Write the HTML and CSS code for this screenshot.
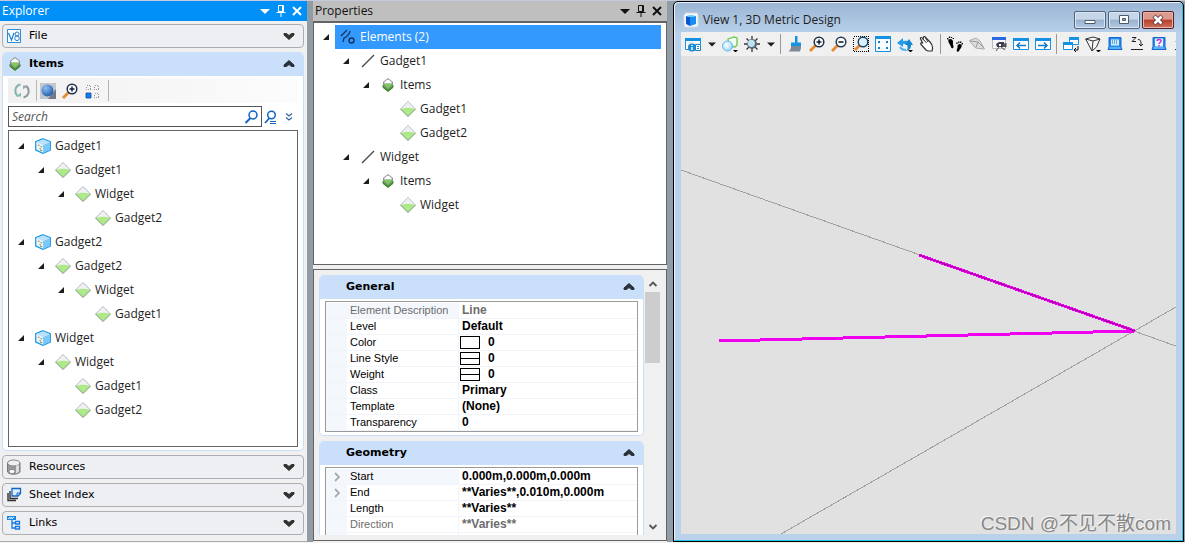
FILE: index.html
```
<!DOCTYPE html>
<html lang="en">
<head>
<meta charset="utf-8">
<title>View 1, 3D Metric Design</title>
<link rel="stylesheet" href="styles.css">
</head>
<body>
<svg class="defs" aria-hidden="true">
  <defs>
    <radialGradient id="g-ball" cx=".35" cy=".3" r=".8"><stop offset="0" stop-color="#8cc0f4"/><stop offset="1" stop-color="#1b55a0"/></radialGradient>
    <radialGradient id="g-bubble" cx=".4" cy=".4" r=".7"><stop offset="0" stop-color="#ffffff"/><stop offset="1" stop-color="#8fd0fa"/></radialGradient>
    <symbol id="expander" viewBox="0 0 8 8"><path d="M7 1v6H1z" fill="#1e1e1e"/></symbol>
    <symbol id="caret" viewBox="0 0 10 10"><path d="M0 3h10L5 8z" fill="currentColor"/></symbol>
    <symbol id="pin" viewBox="0 0 10 12"><path d="M2.500 .5h5v6h-5zM6.500 .5v6M.5 7.500h9M5 7v5" fill="none" stroke="currentColor"/></symbol>
    <symbol id="close" viewBox="0 0 10 10"><path d="M1 1l8 8M9 1L1 9" fill="none" stroke="currentColor" stroke-width="2"/></symbol>
    <symbol id="chev-down" viewBox="0 0 12 8"><path d="M1 1.500h2.500L6 3.500l2.500-2H11v1.500L6 7.500 1 3z" fill="#333" stroke="#333" stroke-linejoin="round"/></symbol>
    <symbol id="chev-up" viewBox="0 0 12 8"><path d="M1 6.500h2.500L6 4.500l2.500 2H11V5L6 .5 1 5z" fill="#2b323a" stroke="#2b323a" stroke-linejoin="round"/></symbol>
    <symbol id="cube" viewBox="0 0 16 16"><path d="M8 .7l7.300 3v8.300L8 15.300.7 12V3.700z" fill="#e2f4ff" stroke="#1a93e0" stroke-width="1.200"/><path d="M8 7l7-3v8l-7 3z" fill="#79c8f8"/><path d="M8 1.500l6.500 2.500L8 7 1.500 4z" fill="#b7e1fc"/><path d="M3 7l1.500.5M4.500 10.500l1.500.5" stroke="#e8733a" stroke-width="1.300"/><path d="M5.500 8.500l1.500.5M5 12l2 .8" stroke="#66b050" stroke-width="1.200"/></symbol>
    <symbol id="diamond" viewBox="0 0 16 16"><path d="M8 .5L15.500 8 8 15.500.5 8z" fill="#eef0f3"/><path d="M2 7.500Q8 6 14 7.500L15 8l-7 7-7-7z" fill="#aeea88"/><path d="M.5 8L8 .5 15.500 8" fill="none" stroke="#b4b9be"/><path d="M.5 8L8 15.500 15.500 8" fill="none" stroke="#60865a" stroke-width=".9"/></symbol>
    <symbol id="items" viewBox="0 0 16 16"><path d="M3 8l5 3.500L13 8v2.500L8 14.500l-5-4z" fill="#3f9c1f" stroke="#2f6f1d" stroke-width=".8"/><path d="M3 5l5-4 5 4v3.500l-5 4-5-4z" fill="#8d9297"/><path d="M4.300 5L8 2.200 11.700 5v1.500H4.300z" fill="#fff"/><path d="M4.500 7Q8 6 11.500 7v1L8 11 4.500 8z" fill="#7cd050"/></symbol>
    <symbol id="line" viewBox="0 0 16 16"><path d="M2 14L14 2" stroke="#444" stroke-width="1.200"/></symbol>
    <symbol id="elements" viewBox="0 0 16 16"><path d="M1 7l6-6M3 13l1-4 2-1 3-3 1-3" fill="none" stroke="#17355c" stroke-width="1.300"/><circle cx="11.500" cy="11.500" r="2.500" fill="none" stroke="#17355c" stroke-width="1.400"/></symbol>
    <symbol id="v8" viewBox="0 0 16 16"><path d="M.5 1.500h13v13H.5z" fill="#fff" stroke="#2a8fdb"/><path d="M1.500 5L4.500 12l2.500-7" fill="none" stroke="#1c7fd0" stroke-width="1.200"/><circle cx="10" cy="6" r="2" fill="none" stroke="#1c7fd0"/><circle cx="10" cy="10.300" r="2.300" fill="none" stroke="#1c7fd0"/></symbol>
    <symbol id="resources" viewBox="0 0 16 16"><path d="M.5 4v9c2 3 10 3 12.500 0V4z" fill="#98989e" stroke="#77777c"/><ellipse cx="6.700" cy="4" rx="6.200" ry="3" fill="#f0f0f2" stroke="#85858a"/><path d="M9 6.500v8l3-1.500V6z" fill="#ddd"/><ellipse cx="5" cy="12.500" rx="3" ry="2.200" fill="#f8f8fa" stroke="#888"/></symbol>
    <symbol id="sheets" viewBox="0 0 16 16"><path d="M1 6v7.500h8M3 4v7.500h8" fill="none" stroke="#333" stroke-width="1.400"/><path d="M5 1.500h8.500v5l-2.500 2.500H5z" fill="#d9efff" stroke="#1565c0" stroke-width="1.300"/><path d="M13.500 6H10v3" fill="none" stroke="#1565c0"/></symbol>
    <symbol id="links" viewBox="0 0 16 16"><path d="M0 1h9v4H0z" fill="#1688e8"/><path d="M1 4l2-2v2l2-2v2l2-2" stroke="#fff" fill="none" stroke-width=".8"/><path d="M5 5v8h4M5 8h4" fill="none" stroke="#1478e0" stroke-width="1.300"/><path d="M8.500 6.500h4v2.500h-4zM8.500 11.500h4V14h-4z" fill="#fff" stroke="#1478e0" stroke-width="1.300"/></symbol>
    <symbol id="refresh" viewBox="0 0 16 16"><path d="M6.500 1.500C0 3 0 11 4.500 13" fill="none" stroke="#83b4b0" stroke-width="2"/><path d="M2 13.500h5v-4z" fill="#8bb9b7"/><path d="M9.500 14.500C16 13 16 5 11.500 3" fill="none" stroke="#8e9ca2" stroke-width="2"/><path d="M14 2.500H9v4z" fill="#9babb1"/></symbol>
    <symbol id="globe" viewBox="0 0 16 16"><path d="M0 0h16v16H0z" fill="#c3c8ce"/><path d="M8 16h8V6z" fill="#747b84"/><circle cx="7.500" cy="7.500" r="6" fill="url(#g-ball)"/></symbol>
    <symbol id="zoom-in" viewBox="0 0 16 16"><path d="M1 15l5.500-5.500" stroke="#e88b2e" stroke-width="2.800"/><circle cx="10" cy="6" r="4.800" fill="#fff" stroke="#1d2f4a" stroke-width="1.500"/><path d="M7.500 6h5M10 3.500v5" stroke="#0d2038" stroke-width="1.500"/></symbol>
    <symbol id="zoom-out" viewBox="0 0 16 16"><path d="M1 15l5.500-5.500" stroke="#e88b2e" stroke-width="2.800"/><circle cx="10" cy="6" r="4.800" fill="#fff" stroke="#263a57" stroke-width="1.500"/><path d="M7.500 6h5" stroke="#0d2038" stroke-width="1.600"/></symbol>
    <symbol id="zoom-window" viewBox="0 0 16 16"><path d="M.5 .5h15v15H.5z" fill="none" stroke="#000" stroke-dasharray="1 1" shape-rendering="crispEdges"/><path d="M2 14l5-5" stroke="#e88b2e" stroke-width="2.800"/><circle cx="10" cy="6" r="4.800" fill="#d9f0ff" stroke="#1f4566" stroke-width="1.500"/></symbol>
    <symbol id="squares" viewBox="0 0 16 16"><path d="M2.500 2.500h4v4h-4zM10.500 2.500h4v4h-4zM10.500 10.500h4v4h-4z" fill="none" stroke="#999" stroke-dasharray="1 1" shape-rendering="crispEdges"/><path d="M2 10h5v5H2z" fill="#1280f0" stroke="#0a4fa0" stroke-width=".8"/></symbol>
    <symbol id="search" viewBox="0 0 16 16"><path d="M1.500 14l5-5" stroke="#1264c8" stroke-width="1.900"/><circle cx="9" cy="6" r="4" fill="none" stroke="#1264c8" stroke-width="1.500"/></symbol>
    <symbol id="search-adv" viewBox="0 0 16 16"><path d="M2 14l4.500-5" stroke="#1264c8" stroke-width="1.800"/><circle cx="8.500" cy="6" r="3.800" fill="none" stroke="#1264c8" stroke-width="1.500"/><path d="M7 12.500h6M7 14.500h6" stroke="#1264c8"/></symbol>
    <symbol id="more" viewBox="0 0 10 10"><path d="M2 1.500l3 2.500 3-2.500M2 5.500L5 8l3-2.500" fill="none" stroke="#35629a" stroke-width="1.200"/></symbol>
    <symbol id="view" viewBox="0 0 16 16"><path d="M3 1h11l1 2v11l-3 1H2l-1-3V3z" fill="#f4f8fb" stroke="#d5dde6"/><path d="M3 4l4 1v9l-4-2z" fill="#0b56cc"/><path d="M7 5l6-1v8l-6 2z" fill="#168bf4"/><path d="M3 4l5-1 5 1-6 1z" fill="#4ecbfa"/></symbol>
    <symbol id="attributes" viewBox="0 0 16 16"><path d="M.5 2.500h15V8M.5 2.500v11H4" fill="#fff" stroke="#1592e2"/><path d="M0 2h16v3H0z" fill="#1592e2"/><circle cx="7" cy="11.500" r="4" fill="#178ad8"/><path d="M7 11v3M7 9v1" stroke="#fff" stroke-width="1.500"/><path d="M10.500 8.500h5v6h-5z" fill="#fff" stroke="#1a83c9"/><path d="M12 10.500h2M12 12.500h2" stroke="#1a83c9"/></symbol>
    <symbol id="display" viewBox="0 0 16 16"><path d="M6 3l6-2 3 1v7l-2 2-6-1z" fill="#f1fff0" stroke="#6bc54b" stroke-width="1.300"/><circle cx="5.500" cy="10" r="5" fill="url(#g-bubble)" stroke="#61b7ed"/><path d="M11 14h5l-2.500 2.500z"/></symbol>
    <symbol id="sun" viewBox="0 0 16 16"><path d="M8 0v16M0 8h16M2.500 2.500l11 11M13.500 2.500l-11 11" stroke="#333" stroke-width="1.300"/><circle cx="8" cy="8" r="5" fill="#5c6a76"/><circle cx="7.300" cy="7.300" r="3.600" fill="#bfe2f4"/></symbol>
    <symbol id="brush" viewBox="0 0 16 16"><path d="M8 0h2.500v6.500H14V10H4V6.500h4z" fill="#1592e2"/><path d="M4 10h10v2l-1 3.500H1.500C4 13.500 4 12 4 10z" fill="#7f8993"/></symbol>
    <symbol id="fit" viewBox="0 0 16 16"><path d="M.5 .5h15v15H.5z" fill="#f9fdff" stroke="#1592e2"/><path d="M0 0h16v3H0z" fill="#1592e2"/><path d="M3 5h2v2H3zM11 5h2v2h-2zM3 11h2v2H3zM11 11h2v2h-2z" fill="#187fc4"/></symbol>
    <symbol id="rotate" viewBox="0 0 16 16"><path d="M0 7l6-5v3c6-1 9 1 9 4-2-2-5-1-9-1v3z" fill="#249ee9"/><path d="M8 9l4-6 4 6h-2c0 3-1 5-5 6 2-2 2-4 1-6z" fill="#1587d0"/><path d="M3 11c1 2 3 3 6 3" stroke="#48b6f4" stroke-width="2" fill="none"/><path d="M11 14h5l-2.500 2.500z"/></symbol>
    <symbol id="hand" viewBox="0 0 16 16"><path d="M7 14L2 8.500C1 7 3 6 4 7.500L1.500 3C1 1 3 1 4 3L4.500 1c1-1 2 0 2.500 1l4 4c3 3 3 6 2 9H9z" fill="#fff" stroke="#333" stroke-width="1.200"/><path d="M4 3l3.500 4M6.500 2L9 6" stroke="#333" fill="none"/></symbol>
    <symbol id="feet" viewBox="0 0 16 16"><path d="M1.500 3.500c2-1.500 5 0 4.500 3-.3 1.500 0 2 .5 4 .3 2-2 2.500-2.500.5C3.500 8.500.5 6.500 1.500 3.500z"/><path d="M.8 3.500V2M2.500 2V.5M4.500 2V1M6.300 3V2" stroke="#000" stroke-width="1.300"/><path d="M14.500 8.500c-2-1.500-4.500 0-4 2.500.3 1.500-.5 1.500-.8 3-.2 2 2 2.500 2.500.7.500-2 3.300-3.200 2.300-6.200z"/><path d="M15.300 8.500V7M13.700 7V5.500M11.800 7V5.500M10 8V6.500" stroke="#000" stroke-width="1.300"/></symbol>
    <symbol id="fly" viewBox="0 0 16 16"><path d="M.5 4.500L7 2l4 3 4.500 8-9-1-5-6z" fill="#dedede" stroke="#aaa"/><path d="M1 5l8 1 6 6M9 6l-2 5" fill="none" stroke="#999"/></symbol>
    <symbol id="camera" viewBox="0 0 16 16"><path d="M1.500 2.500h13v10h-13z" fill="#f8f8fb" stroke="#bbb"/><path d="M1 1h14v3H1z" fill="#2868e0"/><path d="M5 8l3-2h5v5H6z" fill="#383e4c"/><path d="M12 9l3-2v4l-3-1zM8 11l-3 4M10 11l4 3" fill="#555" stroke="#555"/><path d="M8 8h2v2H8z" fill="#fff"/></symbol>
    <symbol id="prev" viewBox="0 0 16 16"><path d="M.5 2.500h15v11H.5z" fill="#fff" stroke="#1592e2"/><path d="M0 2h16v3H0z" fill="#1592e2"/><path d="M4 9.500h9M7 6.500l-3 3 3 3" fill="none" stroke="#127ac4" stroke-width="1.500"/></symbol>
    <symbol id="next" viewBox="0 0 16 16"><path d="M.5 2.500h15v11H.5z" fill="#fff" stroke="#1592e2"/><path d="M0 2h16v3H0z" fill="#1592e2"/><path d="M3 9.500h9M9 6.500l3 3-3 3" fill="none" stroke="#127ac4" stroke-width="1.500"/></symbol>
    <symbol id="copy-view" viewBox="0 0 16 16"><path d="M6.500 1.500h9v7h-9z" fill="#fff" stroke="#1592e2"/><path d="M6 1h10v3H6z" fill="#1592e2"/><path d="M.5 6.500h9v7h-9z" fill="#fff" stroke="#1592e2"/><path d="M0 6h10v3H0z" fill="#1592e2"/><path d="M15 10v4h-3m1-2l-2 2 2 2" fill="none" stroke="#111"/></symbol>
    <symbol id="frustum" viewBox="0 0 16 16"><path d="M.7 3L8 1l7 2-3.500 8L7 15z" fill="#f7f7f7" stroke="#333"/><path d="M.7 3L8 5l7-2M8 5l-1 10" fill="none" stroke="#333"/><path d="M11 14h5l-2.500 2.500z"/></symbol>
    <symbol id="screen" viewBox="0 0 16 16"><path d="M2 1.500h12v9l1 3H1l1-3z" fill="#278cf0" stroke="#1767c8"/><path d="M4 3.500h8v6H4z" fill="#c8edff"/><path d="M5 5h6M5 7h6" stroke="#245da8" stroke-dasharray="1 1"/><path d="M2.500 12h11" stroke="#83d5ff"/></symbol>
    <symbol id="z-axis" viewBox="0 0 16 16"><path d="M3 1.500h4L3 5.500h4M2 13.500h12M9 3.500c3 0 3 2 3 6M10 8l2 2 2-2" fill="none" stroke="#222"/></symbol>
    <symbol id="screen-help" viewBox="0 0 16 16"><path d="M2 1.500h12v9l1 3H1l1-3z" fill="#278cf0" stroke="#1767c8"/><path d="M4 2.500h8v8H4z" fill="#e5f5ff"/><path d="M6 5c0-2 4-2 4 0 0 1.500-2 1.500-2 3M8 9v1.500" fill="none" stroke="#d52bd0" stroke-width="1.500"/><path d="M2.500 12h11" stroke="#83d5ff"/></symbol>
    <symbol id="min" viewBox="0 0 12 12"><path d="M1 6.500h10v3H1z" fill="#fff" stroke="#4b5b6c"/></symbol>
    <symbol id="max" viewBox="0 0 12 12"><path d="M1.500 1.500h9v8h-9z" fill="#fff" stroke="#4b5b6c"/><path d="M4.500 4.500h3v2h-3z" fill="#8fa8c4" stroke="#4b5b6c"/></symbol>
    <symbol id="win-close" viewBox="0 0 12 12"><path d="M2 2l8 8M10 2l-8 8" stroke="#5b4048" stroke-width="4.400"/><path d="M2.500 2.500l7 7M9.500 2.500l-7 7" stroke="#fff" stroke-width="2.600"/></symbol>
    <symbol id="arrow-up" viewBox="0 0 10 8"><path d="M1.500 6L5 2.500 8.500 6" fill="none" stroke="#555" stroke-width="1.800"/></symbol>
    <symbol id="arrow-down" viewBox="0 0 10 8"><path d="M1.500 2L5 5.500 8.500 2" fill="none" stroke="#555" stroke-width="1.800"/></symbol>
    <symbol id="row-more" viewBox="0 0 8 10"><path d="M2 1l4 4-4 4" fill="none" stroke="#aaa" stroke-width="1.800"/></symbol>
  </defs>
</svg>

<div class="workspace">
  <section class="panel explorer" aria-label="Explorer">
    <header class="panel-title active">
      <h2>Explorer</h2>
      <button aria-label="Menu"><svg class="i10"><use href="#caret"/></svg></button>
      <button aria-label="Pin"><svg class="i-pin"><use href="#pin"/></svg></button>
      <button aria-label="Close"><svg class="i10"><use href="#close"/></svg></button>
    </header>
    <div class="accordion">
      <button class="section-bar"><svg class="i16"><use href="#v8"/></svg><span>File</span><svg class="i-chev"><use href="#chev-down"/></svg></button>
      <div class="card grow">
        <button class="card-head"><svg class="i16"><use href="#items"/></svg><span>Items</span><svg class="i-chev"><use href="#chev-up"/></svg></button>
        <div class="items-body">
          <div class="items-tools">
            <button aria-label="Refresh"><svg class="i16"><use href="#refresh"/></svg></button>
            <i class="divider"></i>
            <button aria-label="Globe"><svg class="i16"><use href="#globe"/></svg></button>
            <button aria-label="Zoom"><svg class="i16"><use href="#zoom-in"/></svg></button>
            <button aria-label="Layout"><svg class="i16"><use href="#squares"/></svg></button>
            <i class="divider end"></i>
          </div>
          <div class="search-row">
            <div class="search-box">
              <input type="text" placeholder="Search" aria-label="Search">
              <button aria-label="Search"><svg class="i16"><use href="#search"/></svg></button>
            </div>
            <button aria-label="Advanced search"><svg class="i16"><use href="#search-adv"/></svg></button>
            <button aria-label="More"><svg class="i10"><use href="#more"/></svg></button>
          </div>
          <div class="tree-box">
            <ul class="tree">
              <li><div class="node"><svg class="exp"><use href="#expander"/></svg><span class="label"><svg class="i16"><use href="#cube"/></svg>Gadget1</span></div>
                <ul><li><div class="node"><svg class="exp"><use href="#expander"/></svg><span class="label"><svg class="i16"><use href="#diamond"/></svg>Gadget1</span></div>
                  <ul><li><div class="node"><svg class="exp"><use href="#expander"/></svg><span class="label"><svg class="i16"><use href="#diamond"/></svg>Widget</span></div>
                    <ul><li><div class="node"><i class="exp"></i><span class="label"><svg class="i16"><use href="#diamond"/></svg>Gadget2</span></div></li></ul></li></ul></li></ul></li>
              <li><div class="node"><svg class="exp"><use href="#expander"/></svg><span class="label"><svg class="i16"><use href="#cube"/></svg>Gadget2</span></div>
                <ul><li><div class="node"><svg class="exp"><use href="#expander"/></svg><span class="label"><svg class="i16"><use href="#diamond"/></svg>Gadget2</span></div>
                  <ul><li><div class="node"><svg class="exp"><use href="#expander"/></svg><span class="label"><svg class="i16"><use href="#diamond"/></svg>Widget</span></div>
                    <ul><li><div class="node"><i class="exp"></i><span class="label"><svg class="i16"><use href="#diamond"/></svg>Gadget1</span></div></li></ul></li></ul></li></ul></li>
              <li><div class="node"><svg class="exp"><use href="#expander"/></svg><span class="label"><svg class="i16"><use href="#cube"/></svg>Widget</span></div>
                <ul><li><div class="node"><svg class="exp"><use href="#expander"/></svg><span class="label"><svg class="i16"><use href="#diamond"/></svg>Widget</span></div>
                  <ul><li><div class="node"><i class="exp"></i><span class="label"><svg class="i16"><use href="#diamond"/></svg>Gadget1</span></div></li>
                    <li><div class="node"><i class="exp"></i><span class="label"><svg class="i16"><use href="#diamond"/></svg>Gadget2</span></div></li></ul></li></ul></li>
            </ul>
          </div>
        </div>
      </div>
      <button class="section-bar"><svg class="i16"><use href="#resources"/></svg><span>Resources</span><svg class="i-chev"><use href="#chev-down"/></svg></button>
      <button class="section-bar"><svg class="i16"><use href="#sheets"/></svg><span>Sheet Index</span><svg class="i-chev"><use href="#chev-down"/></svg></button>
      <button class="section-bar"><svg class="i16"><use href="#links"/></svg><span>Links</span><svg class="i-chev"><use href="#chev-down"/></svg></button>
    </div>
  </section>

  <section class="panel properties" aria-label="Properties">
    <header class="panel-title">
      <h2>Properties</h2>
      <button aria-label="Menu"><svg class="i10"><use href="#caret"/></svg></button>
      <button aria-label="Pin"><svg class="i-pin"><use href="#pin"/></svg></button>
      <button aria-label="Close"><svg class="i10"><use href="#close"/></svg></button>
    </header>
    <div class="selection-box">
      <ul class="tree">
        <li><div class="node"><svg class="exp"><use href="#expander"/></svg><span class="label selected"><svg class="i16"><use href="#elements"/></svg>Elements (2)</span></div>
          <ul>
            <li><div class="node"><svg class="exp"><use href="#expander"/></svg><span class="label"><svg class="i16"><use href="#line"/></svg>Gadget1</span></div>
              <ul><li><div class="node"><svg class="exp"><use href="#expander"/></svg><span class="label"><svg class="i16"><use href="#items"/></svg>Items</span></div>
                <ul><li><div class="node"><i class="exp"></i><span class="label"><svg class="i16"><use href="#diamond"/></svg>Gadget1</span></div></li>
                  <li><div class="node"><i class="exp"></i><span class="label"><svg class="i16"><use href="#diamond"/></svg>Gadget2</span></div></li></ul></li></ul></li>
            <li><div class="node"><svg class="exp"><use href="#expander"/></svg><span class="label"><svg class="i16"><use href="#line"/></svg>Widget</span></div>
              <ul><li><div class="node"><svg class="exp"><use href="#expander"/></svg><span class="label"><svg class="i16"><use href="#items"/></svg>Items</span></div>
                <ul><li><div class="node"><i class="exp"></i><span class="label"><svg class="i16"><use href="#diamond"/></svg>Widget</span></div></li></ul></li></ul></li>
          </ul></li>
      </ul>
    </div>
    <div class="details-box">
      <div class="details-list">
        <div class="card">
          <button class="card-head plain"><span>General</span><svg class="i-chev"><use href="#chev-up"/></svg></button>
          <div class="grid-wrap">
            <table class="props">
              <tr class="muted first"><td></td><th>Element Description</th><td>Line</td></tr>
              <tr><td></td><th>Level</th><td>Default</td></tr>
              <tr><td></td><th>Color</th><td><i class="swatch"></i>0</td></tr>
              <tr><td></td><th>Line Style</th><td><i class="swatch ruled"></i>0</td></tr>
              <tr><td></td><th>Weight</th><td><i class="swatch ruled"></i>0</td></tr>
              <tr><td></td><th>Class</th><td>Primary</td></tr>
              <tr><td></td><th>Template</th><td>(None)</td></tr>
              <tr><td></td><th>Transparency</th><td>0</td></tr>
            </table>
          </div>
        </div>
        <div class="card">
          <button class="card-head plain"><span>Geometry</span><svg class="i-chev"><use href="#chev-up"/></svg></button>
          <div class="grid-wrap">
            <table class="props">
              <tr class="first"><td><svg class="i-row"><use href="#row-more"/></svg></td><th>Start</th><td>0.000m,0.000m,0.000m</td></tr>
              <tr><td><svg class="i-row"><use href="#row-more"/></svg></td><th>End</th><td>**Varies**,0.010m,0.000m</td></tr>
              <tr><td></td><th>Length</th><td>**Varies**</td></tr>
              <tr class="muted"><td></td><th>Direction</th><td>**Varies**</td></tr>
              <tr><td></td><th></th><td></td></tr>
            </table>
          </div>
        </div>
      </div>
      <div class="scrollbar">
        <button aria-label="Scroll up"><svg class="i-arrow"><use href="#arrow-up"/></svg></button>
        <div class="track"><div class="thumb"></div></div>
        <button aria-label="Scroll down"><svg class="i-arrow"><use href="#arrow-down"/></svg></button>
      </div>
    </div>
  </section>

  <main class="view-window">
    <header class="window-title">
      <svg class="i16"><use href="#view"/></svg>
      <h1>View 1, 3D Metric Design</h1>
      <button aria-label="Minimize"><svg class="i12"><use href="#min"/></svg></button>
      <button aria-label="Restore"><svg class="i12"><use href="#max"/></svg></button>
      <button class="danger" aria-label="Close"><svg class="i12"><use href="#win-close"/></svg></button>
    </header>
    <div class="view-tools">
      <button aria-label="View attributes"><svg class="i16"><use href="#attributes"/></svg></button>
      <button class="drop" aria-label="Attribute options"><svg class="i8"><use href="#caret"/></svg></button>
      <button aria-label="Display style"><svg class="i16"><use href="#display"/></svg></button>
      <button aria-label="Brightness"><svg class="i16"><use href="#sun"/></svg></button>
      <button class="drop" aria-label="Brightness options"><svg class="i8"><use href="#caret"/></svg></button>
      <i class="sep"></i>
      <button aria-label="Update view"><svg class="i16"><use href="#brush"/></svg></button>
      <button aria-label="Zoom in"><svg class="i16"><use href="#zoom-in"/></svg></button>
      <button aria-label="Zoom out"><svg class="i16"><use href="#zoom-out"/></svg></button>
      <button aria-label="Window area"><svg class="i16"><use href="#zoom-window"/></svg></button>
      <button aria-label="Fit view"><svg class="i16"><use href="#fit"/></svg></button>
      <button aria-label="Rotate view"><svg class="i16"><use href="#rotate"/></svg></button>
      <button aria-label="Pan view"><svg class="i16"><use href="#hand"/></svg></button>
      <i class="sep"></i>
      <button aria-label="Walk"><svg class="i16"><use href="#feet"/></svg></button>
      <button aria-label="Fly"><svg class="i16"><use href="#fly"/></svg></button>
      <button aria-label="Camera"><svg class="i16"><use href="#camera"/></svg></button>
      <button aria-label="View previous"><svg class="i16"><use href="#prev"/></svg></button>
      <button aria-label="View next"><svg class="i16"><use href="#next"/></svg></button>
      <i class="sep"></i>
      <button aria-label="Copy view"><svg class="i16"><use href="#copy-view"/></svg></button>
      <button aria-label="Perspective"><svg class="i16"><use href="#frustum"/></svg></button>
      <button aria-label="Display depth"><svg class="i16"><use href="#screen"/></svg></button>
      <button aria-label="Active depth"><svg class="i16"><use href="#z-axis"/></svg></button>
      <button aria-label="Show depth"><svg class="i16"><use href="#screen-help"/></svg></button>
      <button aria-label="Set depth"><svg class="i16"><use href="#z-axis"/></svg></button>
    </div>
    <div class="canvas">
      <svg class="drawing" viewBox="0 0 495 478" preserveAspectRatio="none" role="img" aria-label="Model lines">
        <g class="axes"><path d="M0 114L495 290"/><path d="M100 478L495 251"/></g>
        <g class="model"><path d="M38 285L454 275"/><path d="M238 199L454 275"/></g>
        <path class="core" d="M238 199L454 275"/>
      </svg>
      <span class="watermark">CSDN @不见不散com</span>
    </div>
  </main>
</div>
</body>
</html>
```
FILE: styles.css
```
* { box-sizing: border-box; }
body {
  margin: 0;
  height: 100vh;
  overflow: hidden;
  background: #f0f0f0;
  font: 12px/16px "Open Sans", "Noto Sans", sans-serif;
  color: #1e1e1e;
}
h1, h2 { margin: 0; font: inherit; flex: 1; }
ul { list-style: none; margin: 0; padding: 0; }
button {
  margin: 0;
  padding: 0;
  border: 0;
  background: none;
  color: inherit;
  font: inherit;
  display: flex;
  align-items: center;
  justify-content: center;
}
svg { display: block; flex: none; }
.defs { position: absolute; width: 0; height: 0; }
.i8 { width: 8px; height: 8px; }
.i10 { width: 10px; height: 10px; }
.i12 { width: 12px; height: 12px; }
.i16 { width: 16px; height: 16px; overflow: visible; }
.i-pin { width: 10px; height: 12px; }
.i-chev { width: 12px; height: 8px; }
.i-arrow { width: 10px; height: 8px; }
.i-row { width: 8px; height: 10px; margin: 0 auto; }

.workspace {
  height: 100%;
  display: flex;
  border-top: 1px solid #c5c9dd;
  border-bottom: 1px solid #f4f4f4;
  background: #929ca5;
}

/* Docked panels */
.panel { display: flex; flex-direction: column; background: #f0f0f0; min-height: 0; }
.explorer { flex: none; width: 307px; border-bottom: 1px solid #aaa; }
.properties { flex: none; width: 354px; margin-left: 6px; padding-bottom: 1px; }
.panel-title {
  height: 20px;
  flex: none;
  display: flex;
  align-items: center;
  gap: 6px;
  padding: 0 5px 0 2px;
  background: #bfbfbf;
  color: #111;
}
.panel-title.active { background: #0090f8; color: #fff; }

.accordion { flex: 1; min-height: 0; display: flex; flex-direction: column; gap: 4px; padding: 3px 3px 6px 2px; }
.section-bar, .card-head {
  height: 24px;
  flex: none;
  width: 100%;
  gap: 6px;
  padding: 0 8px 0 4px;
  font: 11px/16px "DejaVu Sans", sans-serif;
  color: #000;
}
.section-bar { border: 1px solid #adadb3; border-radius: 4px; background: #eeeff3; }
.section-bar span, .card-head span { flex: 1; text-align: left; }
.card-head { background: #c9dffa; font-weight: bold; }
.card-head.plain { padding-left: 26px; }
.card { flex: none; background: #fff; border: 1px solid #c9dffa; border-top: 0; border-radius: 5px; overflow: hidden; }
.card.grow { flex: 1; min-height: 0; display: flex; flex-direction: column; }

.items-body { flex: 1; min-height: 0; display: flex; flex-direction: column; gap: 3px; padding: 2px 5px 3px; }
.items-tools { height: 25px; flex: none; display: flex; align-items: center; background: linear-gradient(90deg, #f1f1f1, #fcfcfc); }
.items-tools button { width: 22px; height: 24px; }
.items-tools button:first-child { width: 28px; }
.divider { width: 1px; height: 21px; background: #b5b5b5; }
.divider.end { margin-left: 5px; }
.search-row { height: 21px; flex: none; display: flex; align-items: center; }
.search-row > button { width: 18px; }
.search-box { flex: 1; height: 100%; display: flex; align-items: center; border: 1px solid #555; background: #fff; padding-right: 1px; }
.search-box input { flex: 1; min-width: 0; border: 0; outline: 0; padding: 0 3px; background: none; font: italic 12px/16px "Open Sans", sans-serif; }
.search-box input::placeholder { color: #555; opacity: 1; }

/* Trees */
.tree-box { flex: 1; min-height: 0; border: 1px solid #646464; background: #fff; padding-top: 3px; overflow: hidden; }
.tree ul { padding-left: 20px; }
.node { height: 24px; display: flex; align-items: center; gap: 3px; padding: 0 5px 0 6px; }
.exp { width: 12px; height: 8px; flex: none; }
.label { height: 24px; display: flex; align-items: center; gap: 4px; padding-left: 5px; white-space: nowrap; }
.label.selected { flex: 1; background: #3399ff; color: #fff; }
.selection-box { flex: 1; min-height: 0; border: 1px solid #646464; border-top-width: 2px; background: #fff; padding-top: 2px; overflow: hidden; }

/* Property grid */
.details-box { height: 272px; flex: none; margin-top: 4px; border: 1px solid #646464; padding: 5px 6px 5px 5px; display: flex; gap: 1px; }
.details-list { flex: 1; min-width: 0; overflow: hidden; display: flex; flex-direction: column; gap: 5px; }
.grid-wrap { margin: 2px 5px 3px; border: 1px solid #9a9a9a; padding-top: 1px; }
.props { width: 100%; border-spacing: 0; table-layout: fixed; font: 12px/15px "Liberation Sans", Arial, sans-serif; color: #000; }
.props td, .props th { height: 16px; padding: 0 0 0 3px; border-bottom: 1px solid #f1f4fa; text-align: left; font-weight: normal; white-space: nowrap; }
.props td:first-child { width: 21px; padding: 0; background: #f4f7fc; }
.props th { width: 111px; font-size: 11px; }
.props td:last-child { border-left: 1px solid #f1f4fa; font-weight: bold; }
.props .first th { background: #f4f7fc; }
.props .muted th, .props .muted td { color: #6d6d6d; }
.swatch { display: inline-block; vertical-align: top; width: 20px; height: 13px; margin: 1px 8px 0 -2px; border: 1px solid #000; background: #fff; }
.swatch.ruled { background: linear-gradient(#000, #000) 0 5px / 100% 1px no-repeat #fff; }
.scrollbar { width: 15px; flex: none; display: flex; flex-direction: column; }
.scrollbar button { width: 15px; height: 17px; }
.track { flex: 1; }
.thumb { height: 71px; background: #cdcdcd; }

/* View window */
.view-window {
  flex: 1;
  min-width: 0;
  margin: 0 1px 0 6px;
  display: flex;
  flex-direction: column;
  padding: 0 7px;
  border: 1px solid #000;
  border-radius: 5px 5px 0 0;
  box-shadow: inset -1px -1px #22c8e8, inset 1px 1px #e6f3ff;
  background: linear-gradient(#9ab5d4, #b9d1ea 32px, #b9d1ea);
  padding-bottom: 7px;
}
.window-title { height: 30px; flex: none; display: flex; align-items: center; gap: 2px; padding: 6px 2px 0; }
.window-title h1 { padding-left: 2px; white-space: nowrap; }
.window-title button { width: 32px; height: 18px; border: 1px solid #52657c; border-radius: 2px; background: linear-gradient(#c5d6e8 45%, #98b2ce 50%, #b4cae2); box-shadow: inset 0 0 0 1px #d9e6f3; }
.window-title button.danger { background: linear-gradient(#dc9a8c 45%, #b83d27 50%, #cc7460); border-color: #52202a; box-shadow: inset 0 0 0 1px #e6b4aa; }
.view-tools { height: 24px; flex: none; display: flex; align-items: center; overflow: hidden; background: #f0f0f0; padding-left: 1px; }
.view-tools button { flex: none; width: 22px; height: 22px; }
.view-tools .drop { width: 15px; }
.sep { flex: none; width: 6px; height: 20px; background: linear-gradient(#999, #999) 2px 0 / 1px 100% no-repeat; }
.canvas { flex: 1; min-height: 0; position: relative; background: #e1e1e1; }
.drawing { width: 100%; height: 100%; shape-rendering: crispEdges; }
.drawing path { fill: none; vector-effect: non-scaling-stroke; }
.axes path { stroke: #a0a0a0; }
.model path { stroke: #f000f0; stroke-width: 3px; }
.drawing .core { stroke: #a000a0; }
.watermark {
  position: absolute;
  right: 5px;
  bottom: 0;
  font: 19px/20px "Liberation Sans", "Noto Sans CJK SC", sans-serif;
  color: #888;
  text-shadow: -1px -1px #f5f5f5;
  white-space: nowrap;
}
```
